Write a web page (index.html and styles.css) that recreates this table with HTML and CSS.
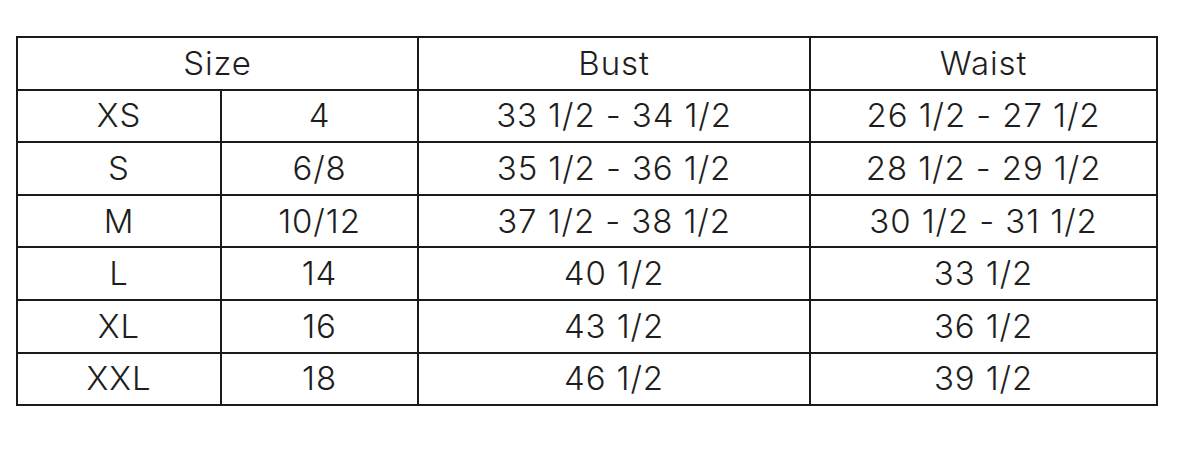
FILE: index.html
```html
<!DOCTYPE html>
<html>
<head>
<meta charset="utf-8">
<link rel="stylesheet" href="styles.css">
</head>
<body>
<table class="chart">
  <colgroup>
    <col class="c1"><col class="c2"><col class="c3"><col class="c4">
  </colgroup>
  <tr><td colspan="2">Size</td><td>Bust</td><td>Waist</td></tr>
  <tr><td>XS</td><td>4</td><td>33 1/2 - 34 1/2</td><td>26 1/2 - 27 1/2</td></tr>
  <tr><td>S</td><td>6/8</td><td>35 1/2 - 36 1/2</td><td>28 1/2 - 29 1/2</td></tr>
  <tr><td>M</td><td>10/12</td><td>37 1/2 - 38 1/2</td><td>30 1/2 - 31 1/2</td></tr>
  <tr><td>L</td><td>14</td><td>40 1/2</td><td>33 1/2</td></tr>
  <tr><td>XL</td><td>16</td><td>43 1/2</td><td>36 1/2</td></tr>
  <tr><td>XXL</td><td>18</td><td>46 1/2</td><td>39 1/2</td></tr>
</table>
</body>
</html>
```
FILE: styles.css
```css
html, body { margin: 0; background: #fff; }
body { padding: 36px 0 0 16px; font-family: Inter, "Noto Sans", sans-serif; color: #1e1e1e; }
.chart {
  border-collapse: collapse;
  table-layout: fixed;
  width: 1142px;
}
.c1 { width: 204px; }
.c2 { width: 197px; }
.c3 { width: 392px; }
.c4 { width: 347px; }
.chart td {
  border: 2px solid #1a1a1a;
  height: 50.6px;
  padding: 0;
  text-align: center;
  vertical-align: middle;
  font-size: 33px;
  font-weight: 350;
  letter-spacing: 0.9px;
  line-height: 1;
}
```
